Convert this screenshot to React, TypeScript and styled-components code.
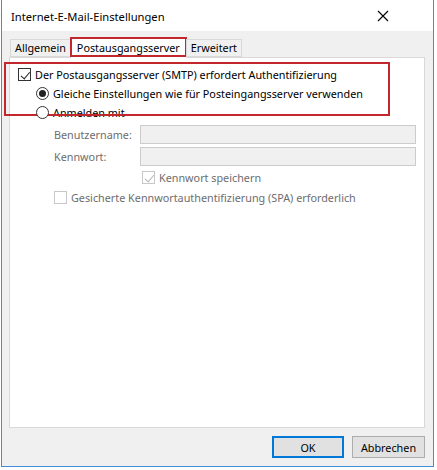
import styled, { createGlobalStyle } from "styled-components";

const GlobalStyle = createGlobalStyle`
  *, *::before, *::after {
    box-sizing: border-box;
  }
  html, body {
    margin: 0;
    padding: 0;
    background: #ffffff;
  }
  body {
    font-family: "Noto Sans", "Open Sans", sans-serif;
    font-size: 10.8px;
    color: #000;
  }
`;

type Tab = { label: string; active?: boolean };

const tabs: Tab[] = [
  { label: "Allgemein" },
  { label: "Postausgangsserver", active: true },
  { label: "Erweitert" },
];

export default function App() {
  return (
    <>
      <GlobalStyle />
      <Window>
        <TitleBar>
          <Title>Internet-E-Mail-Einstellungen</Title>
          <CloseButton aria-label="Schließen">
            <svg width="12" height="12" viewBox="0 0 12 12">
              <path d="M1 1 L11 11 M11 1 L1 11" stroke="#000" strokeWidth="1.1" />
            </svg>
          </CloseButton>
        </TitleBar>
        <Body>
          <TabRow>
            {tabs.map((t) => (
              <TabItem key={t.label} $active={t.active}>
                {t.label}
                {t.active && <Highlight />}
              </TabItem>
            ))}
          </TabRow>
          <Panel>
            <Highlight $box />
            <Row $indent={8}>
              <CheckBox $checked />
              <Label>Der Postausgangsserver (SMTP) erfordert Authentifizierung</Label>
            </Row>
            <Row $indent={26}>
              <Radio $checked />
              <Label>Gleiche Einstellungen wie für Posteingangsserver verwenden</Label>
            </Row>
            <Row $indent={26}>
              <Radio />
              <Label>Anmelden mit</Label>
            </Row>
            <FieldGrid>
              <FieldLabel>Benutzername:</FieldLabel>
              <TextBox />
              <FieldLabel>Kennwort:</FieldLabel>
              <TextBox />
              <span />
              <Row $indent={2}>
                <CheckBox $checked $disabled />
                <Label $disabled>Kennwort speichern</Label>
              </Row>
            </FieldGrid>
            <Row $indent={44}>
              <CheckBox $disabled />
              <Label $disabled>Gesicherte Kennwortauthentifizierung (SPA) erforderlich</Label>
            </Row>
          </Panel>
          <Footer>
            <Button $default>OK</Button>
            <Button>Abbrechen</Button>
          </Footer>
        </Body>
      </Window>
    </>
  );
}

const Window = styled.div`
  margin-left: 1px;
  width: 433px;
  height: 467px;
  border: 1px solid #3f8fdc;
  border-top: none;
  display: flex;
  flex-direction: column;
  background: #f0f0f0;
`;

const TitleBar = styled.div`
  height: 31px;
  flex: none;
  background: #ffffff;
  display: flex;
  align-items: center;
  justify-content: space-between;
  padding-left: 9px;
`;

const Title = styled.span`
  font-size: 11.2px;
  padding-top: 1px;
`;

const CloseButton = styled.div`
  width: 46px;
  height: 31px;
  display: flex;
  align-items: center;
  justify-content: center;
  margin-right: 27px;
`;

const Body = styled.div`
  flex: 1;
  display: flex;
  flex-direction: column;
  padding: 7px 8px 0 7px;
`;

const TabRow = styled.div`
  display: flex;
  align-items: flex-end;
  height: 19px;
  flex: none;
  padding-left: 2px;
  position: relative;
  z-index: 1;
`;

const TabItem = styled.div<{ $active?: boolean }>`
  position: relative;
  height: ${({ $active }) => ($active ? "20px" : "18px")};
  margin-bottom: ${({ $active }) => ($active ? "-1px" : "0")};
  padding: 0 ${({ $active }) => ($active ? "6px" : "4px")};
  display: flex;
  align-items: center;
  background: ${({ $active }) => ($active ? "#ffffff" : "#f0f0f0")};
  border: 1px solid #d9d9d9;
  border-bottom: ${({ $active }) => ($active ? "none" : "1px solid #d9d9d9")};
  margin-left: -1px;
  line-height: 1;
`;

const Highlight = styled.div<{ $box?: boolean }>`
  position: absolute;
  pointer-events: none;
  border: 2px solid #c1272d;
  ${({ $box }) =>
    $box
      ? "left: -6px; top: 4px; width: 386px; height: 54px;"
      : "left: -1px; right: -1px; top: -2px; bottom: 1px;"}
`;

const Panel = styled.div`
  position: relative;
  height: 371px;
  flex: none;
  background: #ffffff;
  border: 1px solid #d9d9d9;
  display: flex;
  flex-direction: column;
  padding-top: 7px;
`;

const Row = styled.div<{ $indent: number }>`
  display: flex;
  align-items: center;
  gap: 4px;
  height: 19px;
  padding-left: ${({ $indent }) => $indent}px;
`;

const Label = styled.span<{ $disabled?: boolean }>`
  color: ${({ $disabled }) => ($disabled ? "#6d6d6d" : "#000")};
  white-space: nowrap;
`;

const CheckBox = styled.span<{ $checked?: boolean; $disabled?: boolean }>`
  width: 13px;
  height: 13px;
  flex: none;
  border: 1px solid ${({ $disabled }) => ($disabled ? "#c8c8c8" : "#333")};
  background: #fff;
  position: relative;
  &::after {
    content: "";
    display: ${({ $checked }) => ($checked ? "block" : "none")};
    position: absolute;
    left: 3.5px;
    top: 0.5px;
    width: 5px;
    height: 8.5px;
    border: solid ${({ $disabled }) => ($disabled ? "#b5b5b5" : "#222")};
    border-width: 0 1.5px 1.5px 0;
    transform: rotate(40deg);
  }
`;

const Radio = styled.span<{ $checked?: boolean }>`
  width: 13px;
  height: 13px;
  flex: none;
  border: 1px solid #333;
  border-radius: 50%;
  background: #fff;
  position: relative;
  &::after {
    content: "";
    display: ${({ $checked }) => ($checked ? "block" : "none")};
    position: absolute;
    left: 2px;
    top: 2px;
    width: 7px;
    height: 7px;
    border-radius: 50%;
    background: #222;
  }
`;

const FieldGrid = styled.div`
  display: grid;
  grid-template-columns: 86px 276px;
  grid-template-rows: 22px 22px 21px;
  padding-left: 44px;
  padding-top: 1px;
  align-items: center;
`;

const FieldLabel = styled.span`
  color: #6d6d6d;
`;

const TextBox = styled.div`
  height: 19px;
  background: #f0f0f0;
  border: 1px solid #cccccc;
`;

const Footer = styled.div`
  display: flex;
  justify-content: flex-end;
  gap: 8px;
  padding-top: 8px;
`;

const Button = styled.div<{ $default?: boolean }>`
  width: ${({ $default }) => ($default ? "72px" : "73px")};
  height: 22px;
  display: flex;
  align-items: center;
  justify-content: center;
  background: #e1e1e1;
  border: ${({ $default }) => ($default ? "2px solid #0078d7" : "1px solid #adadad")};
`;
